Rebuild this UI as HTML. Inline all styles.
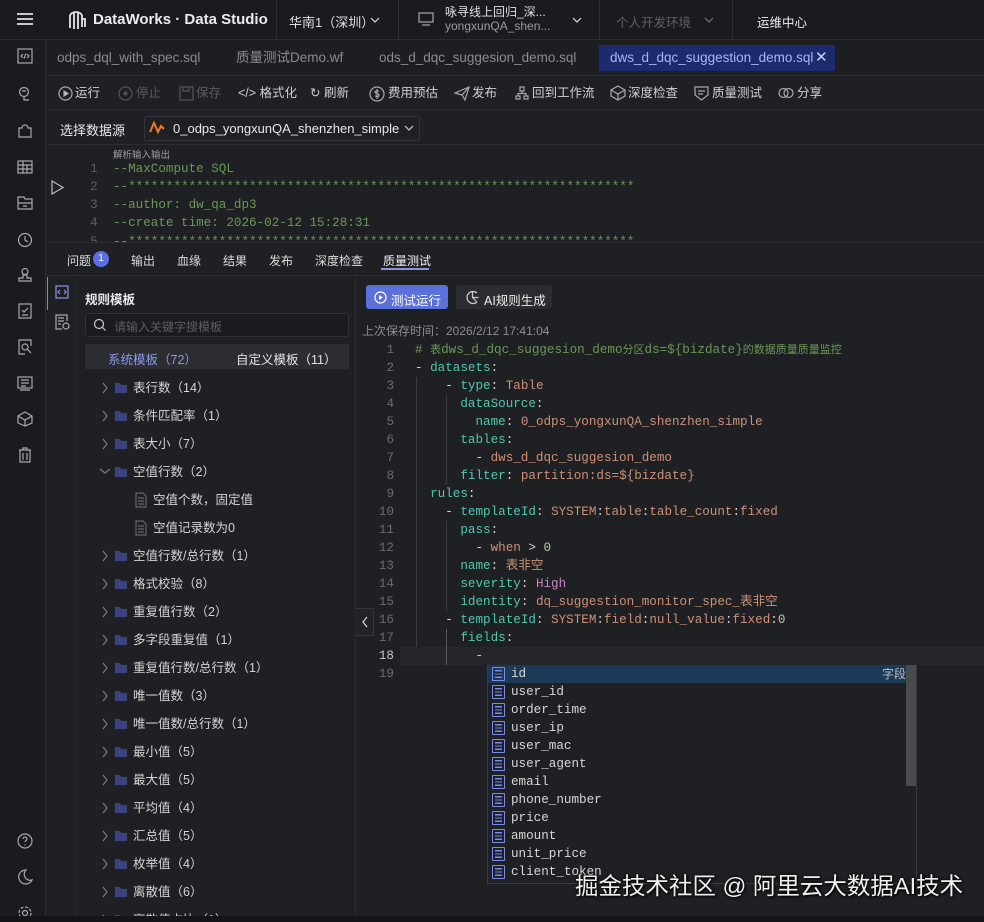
<!DOCTYPE html>
<html><head><meta charset="utf-8">
<style>
*{margin:0;padding:0;box-sizing:border-box}
html{width:984px;height:922px;overflow:hidden}
body{width:984px;height:922px;overflow:hidden;background:#1f2024;font-family:"Liberation Sans","Noto Sans CJK SC",sans-serif;color:#d0d0d4;position:relative;font-size:13px}
.abs{position:absolute}
.mono{font-family:"Liberation Mono","Noto Sans CJK SC",monospace}
svg{position:absolute;fill:none;stroke:#a8a9ae;stroke-width:1.2}
.top{left:0;top:0;width:984px;height:40px;background:#1a1b1f;border-bottom:1px solid #2c2d32}
.rail{left:0;top:40px;width:46px;height:882px;background:#1a1b1f;border-right:1px solid #2c2d32}
.sep{width:1px;background:#2e2f34;top:0;height:40px}
.tabs{left:47px;top:40px;width:937px;height:36px;border-bottom:1px solid #2c2d32;background:#1d1e22}
.tb{top:0;height:36px;line-height:36px;color:#8b8c91;font-size:13.5px}
.tool{left:47px;top:76px;width:937px;height:34px;border-bottom:1px solid #2c2d32}
.ti{top:0;height:34px;line-height:34px;font-size:12.5px;color:#cfd0d4}
.tree .r{position:absolute;height:28px;line-height:28px;font-size:12.5px;color:#d4d5d9}
.code div{position:absolute;height:18px;line-height:18px;font-size:12.6px;white-space:pre}
.k{color:#4ec9b0}.v{color:#ce9178}.c{color:#6a9955}.n{color:#b5cea8}.p{color:#c586c0}.w{color:#d4d4d4}
.cj{font-size:11px}
.ln{position:absolute;width:30px;text-align:right;left:364px;color:#6b6c70;font-size:12.6px;height:18px;line-height:18px}
.ac div{position:absolute;left:0;width:419px;height:18px;line-height:18px;font-size:12.6px;color:#d8d8d8}
.ac i{position:absolute;left:4px;top:2px;width:13px;height:14px;border:1.5px solid #7b8cf0;border-radius:1px;background:repeating-linear-gradient(#1f2024 0 2px,#7b8cf0 2px 3.3px);background-clip:content-box;padding:2px}
.ac span{position:absolute;left:23px}
</style></head><body>
<div class="abs top">
 <div class="abs" style="left:17px;top:13px;width:16px;height:2px;background:#c8c8cc;box-shadow:0 5px 0 #c8c8cc,0 10px 0 #c8c8cc"></div>
 <svg style="left:67px;top:9px" width="20" height="22" viewBox="0 0 20 22"><path d="M3 6v13M7 4v16M11 4v16M15 6v12M3 6c3-4 9-4 12 0M15 10h3v8" stroke="#e5e5e8" stroke-width="1.8"/></svg>
 <div class="abs" style="left:93px;top:11px;font-size:15px;font-weight:bold;color:#ececef">DataWorks · Data Studio</div>
 <div class="abs sep" style="left:276px"></div>
 <div class="abs" style="left:289px;top:12px;font-size:13px;color:#e0e0e3">华南1（深圳）</div>
 <svg style="left:369px;top:15px" width="12" height="10"><path d="M2 3l4 4 4-4" stroke="#ddd"/></svg>
 <div class="abs sep" style="left:398px"></div>
 <svg style="left:418px;top:12px" width="16" height="14"><rect x="1" y="1" width="14" height="9"/><path d="M4 13h8"/></svg>
 <div class="abs" style="left:445px;top:5px;font-size:12px;color:#e0e0e3;line-height:14px">咏寻线上回归_深...<br><span style="color:#9a9ba0">yongxunQA_shen...</span></div>
 <svg style="left:571px;top:15px" width="12" height="10"><path d="M2 3l4 4 4-4" stroke="#ddd"/></svg>
 <div class="abs sep" style="left:599px"></div>
 <div class="abs" style="left:616px;top:12px;font-size:12.5px;color:#5e5f64">个人开发环境</div>
 <svg style="left:703px;top:15px" width="12" height="10"><path d="M2 3l4 4 4-4" stroke="#777"/></svg>
 <div class="abs sep" style="left:732px"></div>
 <div class="abs" style="left:757px;top:12px;font-size:12.5px;color:#eee">运维中心</div>
</div>
<div class="abs rail"></div>
<svg style="left:17px;top:48px" width="16" height="16"><rect x="1" y="1" width="14" height="14"/><path d="M6 6l-2 2 2 2M10 6l2 2-2 2M8.7 5.5l-1.4 5"/></svg>
<svg style="left:17px;top:86px" width="16" height="16"><circle cx="7" cy="6" r="4.5"/><path d="M7 10v4h5M5 5h4"/></svg>
<svg style="left:17px;top:122px" width="16" height="16"><path d="M2 6h3a3 3 0 016 0h3v9H2z"/></svg>
<svg style="left:17px;top:159px" width="16" height="16"><rect x="1" y="2" width="14" height="12"/><path d="M1 6h14M1 10h14M6 2v12M10 6v8"/></svg>
<svg style="left:17px;top:195px" width="16" height="16"><path d="M1 2h6l1 2h7v10H1zM1 8h14M6 11h4"/></svg>
<svg style="left:17px;top:232px" width="16" height="16"><circle cx="8" cy="8" r="6.5"/><path d="M8 4v4l3 2"/></svg>
<svg style="left:17px;top:267px" width="16" height="16"><circle cx="8" cy="4.5" r="3"/><path d="M6 8h4v3h4v3H2v-3h4z"/></svg>
<svg style="left:17px;top:303px" width="16" height="16"><rect x="2" y="1" width="12" height="14"/><path d="M5 7l2 2 4-4M5 12h6"/></svg>
<svg style="left:17px;top:339px" width="16" height="16"><path d="M14 7V1H2v14h6"/><circle cx="8" cy="8" r="3"/><path d="M10 10l4 4"/></svg>
<svg style="left:17px;top:375px" width="16" height="16"><rect x="1" y="2" width="14" height="11"/><path d="M4 5h8M4 8h8M4 11h5M3 15h10"/></svg>
<svg style="left:17px;top:411px" width="16" height="16"><path d="M8 1l7 4v7l-7 3-7-3V5zM1 5l7 4 7-4M8 9v6"/></svg>
<svg style="left:17px;top:447px" width="16" height="16"><path d="M2 3h12M6 3V1h4v2M3 3v12h10V3M6 6v7M10 6v7"/></svg>
<svg style="left:17px;top:833px" width="16" height="16"><circle cx="8" cy="8" r="7"/><path d="M6 6a2 2 0 114 0c0 1.5-2 1.5-2 3M8 11.5v1"/></svg>
<svg style="left:17px;top:869px" width="16" height="16"><path d="M9 1a7 7 0 106 10A6 6 0 019 1z"/></svg>
<svg style="left:17px;top:905px" width="16" height="16"><circle cx="8" cy="8" r="2.5"/><circle cx="8" cy="8" r="6" stroke-dasharray="3 1.7"/></svg>
<div class="abs tabs">
 <div class="abs tb" style="left:10px">odps_dql_with_spec.sql</div>
 <div class="abs tb" style="left:189px">质量测试Demo.wf</div>
 <div class="abs tb" style="left:332px">ods_d_dqc_suggesion_demo.sql</div>
 <div class="abs" style="left:552px;top:5px;width:236px;height:26px;background:#1d2a6e"></div>
 <div class="abs tb" style="left:563px;color:#a9b6f5">dws_d_dqc_suggestion_demo.sql</div>
 <div class="abs tb" style="left:768px;color:#cfd6ff;font-size:15px">✕</div>
</div>
<div class="abs tool">
 <svg style="left:11px;top:10px" width="15" height="15"><circle cx="7.5" cy="7.5" r="6.5"/><path d="M6 5l4 2.5-4 2.5z" fill="#ccc"/></svg>
 <div class="abs ti" style="left:28px">运行</div>
 <svg style="left:71px;top:10px" width="15" height="15"><circle cx="7.5" cy="7.5" r="6.5" stroke="#555"/><circle cx="7.5" cy="7.5" r="2" fill="#555" stroke="none"/></svg>
 <div class="abs ti" style="left:89px;color:#5a5b60">停止</div>
 <svg style="left:132px;top:10px" width="15" height="15"><rect x="1" y="1" width="13" height="13" stroke="#555"/><path d="M4 1v4h6V1" stroke="#555"/></svg>
 <div class="abs ti" style="left:149px;color:#5a5b60">保存</div>
 <div class="abs ti" style="left:191px">&lt;/&gt; 格式化</div>
 <div class="abs ti" style="left:263px">↻ 刷新</div>
 <svg style="left:322px;top:10px" width="16" height="16"><circle cx="8" cy="8" r="7"/><path d="M10 5.5c-1-1-4-1-4 .7s4 1 4 3-3 1.5-4 .5M8 3v10"/></svg>
 <div class="abs ti" style="left:341px">费用预估</div>
 <svg style="left:407px;top:10px" width="16" height="15"><path d="M1 7l14-6-4 13-3-5zM8 9l7-8"/></svg>
 <div class="abs ti" style="left:425px">发布</div>
 <svg style="left:468px;top:10px" width="14" height="14"><rect x="5" y="1" width="4" height="4"/><rect x="1" y="10" width="4" height="3"/><rect x="9" y="10" width="4" height="3"/><path d="M7 5v2.5H3V10M7 7.5h4V10"/></svg>
 <div class="abs ti" style="left:485px">回到工作流</div>
 <svg style="left:563px;top:9px" width="16" height="16"><path d="M8 1l7 4v6l-7 4-7-4V5zM1 5l7 4 7-4M8 9v6"/></svg>
 <div class="abs ti" style="left:581px">深度检查</div>
 <svg style="left:647px;top:9px" width="15" height="16"><path d="M1 2h13v8l-6.5 5L1 10zM4 6h7M4 9h5"/></svg>
 <div class="abs ti" style="left:665px">质量测试</div>
 <svg style="left:731px;top:10px" width="16" height="14"><circle cx="5.5" cy="7" r="4.5"/><circle cx="10.5" cy="7" r="4.5"/></svg>
 <div class="abs ti" style="left:750px">分享</div>
</div>
<div class="abs" style="left:47px;top:110px;width:937px;height:35px;border-bottom:1px solid #2c2d32"></div>
<div class="abs" style="left:60px;top:120px;font-size:13px;color:#e8e8ea">选择数据源</div>
<div class="abs" style="left:144px;top:116px;width:276px;height:25px;border:1px solid #34353a;border-radius:3px"></div>
<svg style="left:148px;top:120px" width="18" height="16"><path d="M2 12l4-9 4 9 3-6 3 3" stroke="#f07a2a" stroke-width="2"/></svg>
<div class="abs" style="left:173px;top:121px;font-size:13px;color:#e8e8ea">0_odps_yongxunQA_shenzhen_simple</div>
<svg style="left:403px;top:123px" width="12" height="10"><path d="M2 3l4 4 4-4" stroke="#ccc"/></svg>
<div class="abs" style="left:113px;top:147px;font-size:9.5px;color:#a0a0a4">解析输入输出</div>
<svg style="left:50px;top:180px" width="14" height="15"><path d="M2 1l11 6.5L2 14z" stroke="#bbb"/></svg>
<div class="code mono">
<div style="left:75px;top:160px;color:#5c5d62">  1</div><div class="c" style="left:113px;top:160px">--MaxCompute SQL</div>
<div style="left:75px;top:178px;color:#5c5d62">  2</div><div class="c" style="left:113px;top:178px;overflow:hidden;width:520px">--*********************************************************************--</div>
<div style="left:75px;top:196px;color:#5c5d62">  3</div><div class="c" style="left:113px;top:196px">--author: dw_qa_dp3</div>
<div style="left:75px;top:214px;color:#5c5d62">  4</div><div class="c" style="left:113px;top:214px">--create time: 2026-02-12 15:28:31</div>
<div style="left:75px;top:233px;color:#5c5d62;height:9px;overflow:hidden">  5</div><div class="c" style="left:113px;top:233px;height:9px;overflow:hidden;width:520px">--*********************************************************************--</div>
</div>
<div class="abs" style="left:47px;top:242px;width:937px;height:34px;border-top:1px solid #2c2d32;border-bottom:1px solid #2c2d32"></div>
<div class="abs" style="left:67px;top:252px;font-size:12px;color:#ddd">问题</div>
<div class="abs" style="left:93px;top:251px;width:16px;height:16px;border-radius:8px;background:#5b6ee8;color:#fff;font-size:10px;text-align:center;line-height:16px">1</div>
<div class="abs" style="left:131px;top:252px;font-size:12px;color:#ddd">输出</div>
<div class="abs" style="left:177px;top:252px;font-size:12px;color:#ddd">血缘</div>
<div class="abs" style="left:223px;top:252px;font-size:12px;color:#ddd">结果</div>
<div class="abs" style="left:269px;top:252px;font-size:12px;color:#ddd">发布</div>
<div class="abs" style="left:315px;top:252px;font-size:12px;color:#ddd">深度检查</div>
<div class="abs" style="left:383px;top:252px;font-size:12px;color:#eee">质量测试</div>
<div class="abs" style="left:381px;top:268px;width:48px;height:2px;background:#8a94d8"></div>
<div class="abs" style="left:47px;top:277px;width:1px;height:33px;background:#7c86d8"></div>
<svg style="left:55px;top:285px" width="14" height="14" ><rect x="1" y="1" width="12" height="12" stroke="#8b95ea"/><path d="M5 5l-2 2 2 2M9 5l2 2-2 2" stroke="#8b95ea"/></svg>
<svg style="left:55px;top:314px" width="15" height="16"><path d="M12 7V1H1v14h6M3 4h6M3 7h6M3 10h3"/><circle cx="11" cy="12" r="3"/></svg>
<div class="abs" style="left:76px;top:277px;width:1px;height:645px;background:#26272b"></div>
<div class="abs" style="left:85px;top:289px;font-size:12.5px;font-weight:bold;color:#e8e8ea">规则模板</div>
<div class="abs" style="left:85px;top:313px;width:264px;height:24px;border:1px solid #303136;border-radius:3px;background:#1a1b1e"></div>
<svg style="left:93px;top:318px" width="14" height="14"><circle cx="6" cy="6" r="4.5" stroke="#ccc"/><path d="M9.5 9.5l3 3" stroke="#ccc"/></svg>
<div class="abs" style="left:114px;top:318px;font-size:12px;color:#5d5e63">请输入关键字搜模板</div>
<div class="abs" style="left:85px;top:344px;width:264px;height:25px;background:#2c2d31"></div>
<div class="abs" style="left:108px;top:349px;font-size:12.5px;color:#8c98ea">系统模板（72）</div>
<div class="abs" style="left:236px;top:349px;font-size:12.5px;color:#e4e4e7">自定义模板（11）</div>
<div class="tree">
<div class="r" style="left:133px;top:374px">表行数（14）</div>
<div class="r" style="left:133px;top:402px">条件匹配率（1）</div>
<div class="r" style="left:133px;top:430px">表大小（7）</div>
<div class="r" style="left:133px;top:458px">空值行数（2）</div>
<div class="r" style="left:153px;top:486px">空值个数，固定值</div>
<div class="r" style="left:153px;top:514px">空值记录数为0</div>
<div class="r" style="left:133px;top:542px">空值行数/总行数（1）</div>
<div class="r" style="left:133px;top:570px">格式校验（8）</div>
<div class="r" style="left:133px;top:598px">重复值行数（2）</div>
<div class="r" style="left:133px;top:626px">多字段重复值（1）</div>
<div class="r" style="left:133px;top:654px">重复值行数/总行数（1）</div>
<div class="r" style="left:133px;top:682px">唯一值数（3）</div>
<div class="r" style="left:133px;top:710px">唯一值数/总行数（1）</div>
<div class="r" style="left:133px;top:738px">最小值（5）</div>
<div class="r" style="left:133px;top:766px">最大值（5）</div>
<div class="r" style="left:133px;top:794px">平均值（4）</div>
<div class="r" style="left:133px;top:822px">汇总值（5）</div>
<div class="r" style="left:133px;top:850px">枚举值（4）</div>
<div class="r" style="left:133px;top:878px">离散值（6）</div>
<div class="r" style="left:133px;top:906px">离散值占比（1）</div>
</div>
<svg style="left:98px;top:380px" width="32" height="540">
<g stroke="#7a7b80">
<path d="M5 3l4 5-4 5"/><path d="M5 31l4 5-4 5"/><path d="M5 59l4 5-4 5"/><path d="M2 89l5 4 5-4"/>
<path d="M5 171l4 5-4 5"/><path d="M5 199l4 5-4 5"/><path d="M5 227l4 5-4 5"/><path d="M5 255l4 5-4 5"/><path d="M5 283l4 5-4 5"/><path d="M5 311l4 5-4 5"/><path d="M5 339l4 5-4 5"/><path d="M5 367l4 5-4 5"/><path d="M5 395l4 5-4 5"/><path d="M5 423l4 5-4 5"/><path d="M5 451l4 5-4 5"/><path d="M5 479l4 5-4 5"/><path d="M5 507l4 5-4 5"/><path d="M5 535l4 5-4 5"/>
</g>
<g fill="#3c4380" stroke="none">
<path d="M17 3h5l1 2h6v8H17z"/><path d="M17 31h5l1 2h6v8H17z"/><path d="M17 59h5l1 2h6v8H17z"/><path d="M17 87h5l1 2h6v8H17z"/>
<path d="M17 171h5l1 2h6v8H17z"/><path d="M17 199h5l1 2h6v8H17z"/><path d="M17 227h5l1 2h6v8H17z"/><path d="M17 255h5l1 2h6v8H17z"/><path d="M17 283h5l1 2h6v8H17z"/><path d="M17 311h5l1 2h6v8H17z"/><path d="M17 339h5l1 2h6v8H17z"/><path d="M17 367h5l1 2h6v8H17z"/><path d="M17 395h5l1 2h6v8H17z"/><path d="M17 423h5l1 2h6v8H17z"/><path d="M17 451h5l1 2h6v8H17z"/><path d="M17 479h5l1 2h6v8H17z"/><path d="M17 507h5l1 2h6v8H17z"/><path d="M17 535h5l1 2h6v8H17z"/>
</g></svg>
<svg style="left:135px;top:492px" width="12" height="44"><path d="M1 1h7l3 3v11H1zM3 6h6M3 9h6M3 12h6" stroke="#666"/><path d="M1 29h7l3 3v11H1zM3 34h6M3 37h6M3 40h6" stroke="#666"/></svg>
<div class="abs" style="left:355px;top:277px;width:1px;height:645px;background:#2a2b2f"></div>
<div class="abs" style="left:356px;top:608px;width:18px;height:28px;border:1px solid #34353a;border-left:none;background:#222327"></div>
<svg style="left:360px;top:615px" width="10" height="14"><path d="M7 2L3 7l4 5" stroke="#ddd"/></svg>
<div class="abs" style="left:366px;top:285px;width:82px;height:24px;background:#5b70d9;border-radius:3px"></div>
<svg style="left:374px;top:291px" width="13" height="13"><circle cx="6.5" cy="6.5" r="5.5" stroke="#fff"/><path d="M5 4l4 2.5-4 2.5z" fill="#fff" stroke="none"/></svg>
<div class="abs" style="left:391px;top:290px;font-size:12.5px;color:#fff">测试运行</div>
<div class="abs" style="left:456px;top:285px;width:96px;height:24px;background:#2b2c30;border-radius:3px"></div>
<svg style="left:465px;top:290px" width="15" height="15"><path d="M12 3a6 6 0 100 9M7.5 1.5v6h6M7.5 7.5l4 4" stroke="#ccc"/></svg>
<div class="abs" style="left:484px;top:290px;font-size:12.5px;color:#eee">AI规则生成</div>
<div class="abs" style="left:362px;top:322px;font-size:12px;color:#8d8e92">上次保存时间：2026/2/12 17:41:04</div>
<div class="abs" style="left:400px;top:647px;width:584px;height:18px;background:#26272b"></div>
<div class="abs" style="left:416px;top:377px;width:1px;height:270px;background:#3a3b40"></div>
<div class="abs" style="left:446px;top:395px;width:1px;height:90px;background:#3a3b40"></div>
<div class="abs" style="left:446px;top:521px;width:1px;height:90px;background:#3a3b40"></div>
<div class="abs" style="left:446px;top:629px;width:1px;height:36px;background:#56575c"></div>
<div class="mono">
<div class="ln" style="top:341px">1</div><div class="ln" style="top:359px">2</div><div class="ln" style="top:377px">3</div><div class="ln" style="top:395px">4</div><div class="ln" style="top:413px">5</div><div class="ln" style="top:431px">6</div><div class="ln" style="top:449px">7</div><div class="ln" style="top:467px">8</div><div class="ln" style="top:485px">9</div><div class="ln" style="top:503px">10</div><div class="ln" style="top:521px">11</div><div class="ln" style="top:539px">12</div><div class="ln" style="top:557px">13</div><div class="ln" style="top:575px">14</div><div class="ln" style="top:593px">15</div><div class="ln" style="top:611px">16</div><div class="ln" style="top:629px">17</div><div class="ln" style="top:647px;color:#c8c8cc">18</div><div class="ln" style="top:665px">19</div>
</div>
<div class="code mono">
<div class="c" style="left:415px;top:341px"># <span class="cj">表</span>dws_d_dqc_suggesion_demo<span class="cj">分区</span>ds=${bizdate}<span class="cj">的数据质量质量监控</span></div>
<div style="left:415px;top:359px"><span class="w">- </span><span class="k">datasets</span><span class="w">:</span></div>
<div style="left:415px;top:377px"><span class="w">    - </span><span class="k">type</span><span class="w">: </span><span class="v">Table</span></div>
<div style="left:415px;top:395px"><span class="k">      dataSource</span><span class="w">:</span></div>
<div style="left:415px;top:413px"><span class="k">        name</span><span class="w">: </span><span class="v">0_odps_yongxunQA_shenzhen_simple</span></div>
<div style="left:415px;top:431px"><span class="k">      tables</span><span class="w">:</span></div>
<div style="left:415px;top:449px"><span class="w">        - </span><span class="v">dws_d_dqc_suggesion_demo</span></div>
<div style="left:415px;top:467px"><span class="k">      filter</span><span class="w">: </span><span class="v">partition:ds=${bizdate}</span></div>
<div style="left:415px;top:485px"><span class="k">  rules</span><span class="w">:</span></div>
<div style="left:415px;top:503px"><span class="w">    - </span><span class="k">templateId</span><span class="w">: </span><span class="v">SYSTEM</span><span class="w">:</span><span class="v">table</span><span class="w">:</span><span class="v">table_count</span><span class="w">:</span><span class="v">fixed</span></div>
<div style="left:415px;top:521px"><span class="k">      pass</span><span class="w">:</span></div>
<div style="left:415px;top:539px"><span class="w">        - </span><span class="v">when</span><span class="w"> &gt; </span><span class="n">0</span></div>
<div style="left:415px;top:557px"><span class="k">      name</span><span class="w">: </span><span class="v">表非空</span></div>
<div style="left:415px;top:575px"><span class="k">      severity</span><span class="w">: </span><span class="p">High</span></div>
<div style="left:415px;top:593px"><span class="k">      identity</span><span class="w">: </span><span class="v">dq_suggestion_monitor_spec_表非空</span></div>
<div style="left:415px;top:611px"><span class="w">    - </span><span class="k">templateId</span><span class="w">: </span><span class="v">SYSTEM</span><span class="w">:</span><span class="v">field</span><span class="w">:</span><span class="v">null_value</span><span class="w">:</span><span class="v">fixed</span><span class="w">:</span><span class="n">0</span></div>
<div style="left:415px;top:629px"><span class="k">      fields</span><span class="w">:</span></div>
<div style="left:415px;top:647px"><span class="w">        -</span></div>
</div>
<div class="abs ac mono" style="left:487px;top:665px;width:430px;height:219px;background:#1f2024;border:1px solid #3a3b40;border-top:none">
 <div style="top:0;background:#1c3a57"><i></i><span>id</span><span style="left:394px;font-family:'Liberation Sans','Noto Sans CJK SC',sans-serif;font-size:12px;color:#bbb">字段</span></div>
 <div style="top:18px"><i></i><span>user_id</span></div>
 <div style="top:36px"><i></i><span>order_time</span></div>
 <div style="top:54px"><i></i><span>user_ip</span></div>
 <div style="top:72px"><i></i><span>user_mac</span></div>
 <div style="top:90px"><i></i><span>user_agent</span></div>
 <div style="top:108px"><i></i><span>email</span></div>
 <div style="top:126px"><i></i><span>phone_number</span></div>
 <div style="top:144px"><i></i><span>price</span></div>
 <div style="top:162px"><i></i><span>amount</span></div>
 <div style="top:180px"><i></i><span>unit_price</span></div>
 <div style="top:198px"><i></i><span>client_token</span></div>
 <div style="left:418px;top:0;width:10px;height:121px;background:#4a4b50"></div>
</div>
<div class="abs" style="left:575px;top:867px;font-size:23.5px;color:#f0f0f0;text-shadow:0 0 3px #000,1px 1px 2px #000;white-space:nowrap">掘金技术社区 @ 阿里云大数据AI技术</div>
<div class="abs" style="left:0;top:916px;width:984px;height:6px;background:#141517"></div>
</body></html>
